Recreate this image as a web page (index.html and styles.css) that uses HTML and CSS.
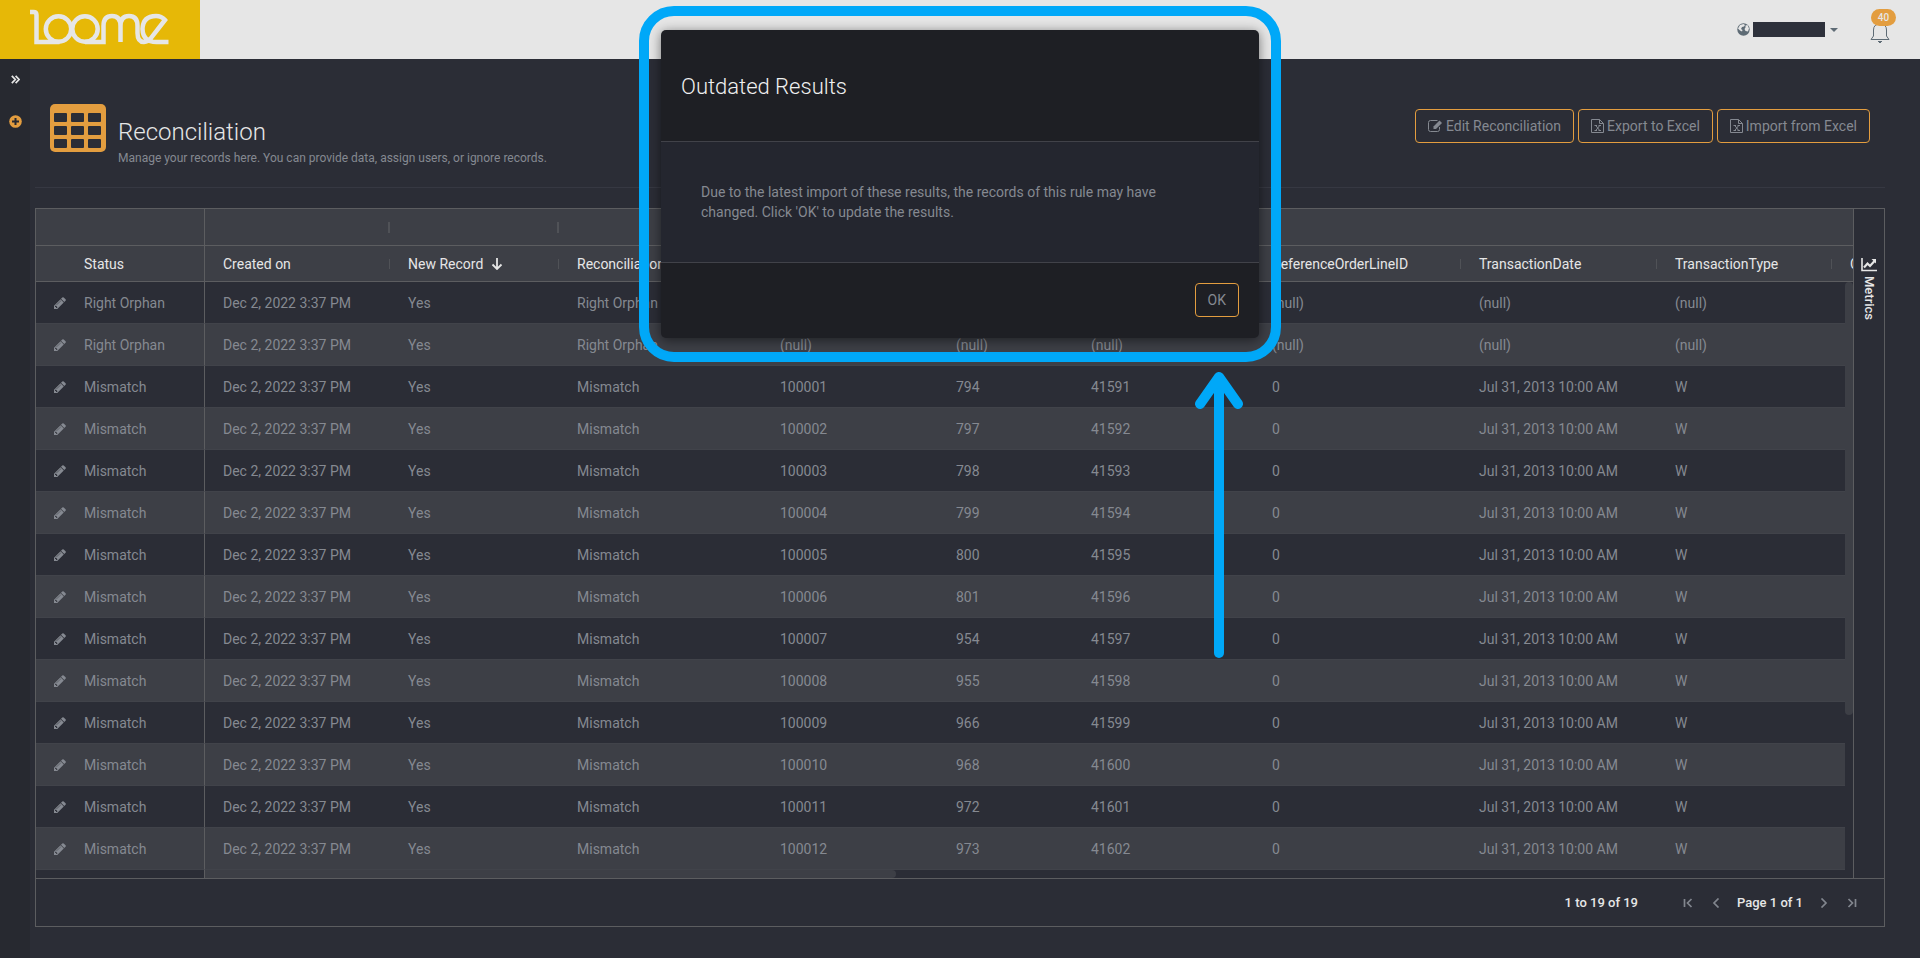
FILE: index.html
```html
<!DOCTYPE html>
<html lang="en">
<head>
<meta charset="utf-8">
<title>Reconciliation</title>
<link rel="stylesheet" href="styles.css">
</head>
<body>
<svg class="defs" aria-hidden="true">
  <symbol id="pencil" viewBox="0 0 1536 1536"><path fill="currentColor" d="M363 1408l91-91-235-235-91 91v107h128v128h107zM886 480q0-22-22-22-10 0-17 7l-542 542q-7 7-7 17 0 22 22 22 10 0 17-7l542-542q7-7 7-17zM832 288l416 416-832 832H0v-416zM1515 384q0 53-37 90l-166 166-416-416 166-165q36-38 90-38 53 0 91 38l235 234q37 39 37 91z"/></symbol>
  <symbol id="excel" viewBox="0 0 13 14"><path d="M.5.5h8l4 4v9H.5zM8.500.5v4h4" fill="none" stroke="currentColor"/><path d="M3.500 6.500h2.500M7.500 6.500H10M3.500 11.500h2.500M7.500 11.500H10M4.800 6.500l3.900 5M8.700 6.500l-3.900 5" fill="none" stroke="currentColor" stroke-width="1"/></symbol>
</svg>
<header class="topbar">
  <a class="brand" href="#" aria-label="Loome">
    <svg width="140" height="38" viewBox="0 0 140 38" fill="none" stroke="#e6e6e6" stroke-width="4.500">
      <path d="M1 4h3.500q3 0 3 3v27h23"/>
      <circle cx="29.500" cy="21" r="12.700"/>
      <circle cx="56" cy="21" r="12.700"/>
      <path d="M56 34h18.500V18q0-10 8.500-10t8.500 10v16M91.500 18q0-10 8.500-10t8.500 10v7q0 9 6.500 9 4 0 7-4l14-18q-3.500-4-9-4-13 0-13.500 13 .5 13 14 13h12"/>
    </svg>
  </a>
  <div class="account">
    <button class="tenant" type="button" aria-label="Tenant">
      <svg width="13" height="13" viewBox="0 0 13 13"><circle cx="6.500" cy="6.500" r="6.200" fill="#5e6b75"/><path d="M3 2l3.500-1 1.500 1-1 1.500-2 .5-1 2 1.500 1-.5 1.500-2-1L1 5.500zM8.500 2.500l2-.5 1.500 3.500-1 3-2.500-.5-1-2 1-1.500z" fill="#e6e6e6"/></svg>
      <span class="redacted"></span>
      <span class="caret"></span>
    </button>
    <button class="bell" type="button" aria-label="Notifications">
      <svg width="20" height="22" viewBox="0 0 20 22" fill="none" stroke="#5e6b75"><path d="M3.500 14V8q0-6 6.500-6t6.500 6v6l2.500 3.500H1z"/><path d="M8 19.500h4M9 20.500h2"/></svg>
      <span class="badge">40</span>
    </button>
  </div>
</header>
<div class="shell">
  <nav class="rail">
    <button type="button" aria-label="Expand"><svg width="9" height="9" viewBox="0 0 9 9" fill="none" stroke="#e6e6e6" stroke-width="1.700"><path d="M.8.8l3.500 3.700L.8 8.200M4.600.8l3.500 3.700-3.500 3.700"/></svg></button>
    <button type="button" aria-label="Add"><svg width="13" height="13" viewBox="0 0 13 13"><circle cx="6.500" cy="6.500" r="6.300" fill="#e39d3f"/><path d="M6.500 3v7M3 6.500h7" stroke="#272930" stroke-width="2"/></svg></button>
  </nav>
  <main class="content">
    <section class="page-head">
      <svg class="page-icon" width="56" height="48" viewBox="0 0 56 48"><rect width="56" height="48" rx="5" fill="#e39d3f"/><g fill="#2b2d36"><rect x="4" y="9" width="13" height="9" rx="1"/><rect x="21" y="9" width="13" height="9" rx="1"/><rect x="38" y="9" width="13" height="9" rx="1"/><rect x="4" y="22" width="13" height="9" rx="1"/><rect x="21" y="22" width="13" height="9" rx="1"/><rect x="38" y="22" width="13" height="9" rx="1"/><rect x="4" y="35" width="13" height="9" rx="1"/><rect x="21" y="35" width="13" height="9" rx="1"/><rect x="38" y="35" width="13" height="9" rx="1"/></g></svg>
      <div class="page-title">
        <h1>Reconciliation</h1>
        <p>Manage your records here. You can provide data, assign users, or ignore records.</p>
      </div>
      <div class="actions">
        <button class="btn" type="button"><svg width="15" height="12" viewBox="0 0 15 12"><path d="M11.500 7v2.500q0 2-2 2h-7q-2 0-2-2v-7q0-2 2-2h7" fill="none" stroke="currentColor"/><path d="M5.500 6.500L11.500.500l2.500 2.500-6 6H5.500z" fill="currentColor"/></svg>Edit Reconciliation</button>
        <button class="btn" type="button"><svg width="13" height="14"><use href="#excel"/></svg>Export to Excel</button>
        <button class="btn" type="button"><svg width="13" height="14"><use href="#excel"/></svg>Import from Excel</button>
      </div>
    </section>
    <section class="grid">
      <div class="grid-main">
        <div class="grid-view">
          <table>
            <colgroup><col class="c-status"><col class="c-created"><col class="c-new"><col class="c-rec"><col class="c-tid"><col class="c-pid"><col class="c-oid"><col class="c-line"><col class="c-date"><col class="c-type"><col></colgroup>
            <thead>
              <tr class="groups"><td class="pinned"></td><td class="sep"></td><td class="sep"></td><td colspan="8"></td></tr>
              <tr><th class="pinned" scope="col">Status</th><th class="sep" scope="col">Created on</th><th class="sep" scope="col">New Record <svg class="sort" width="12" height="12" viewBox="0 0 12 12" fill="none" stroke="currentColor" stroke-width="1.800"><path d="M6 0v11M1.500 6.500L6 11l4.500-4.500"/></svg></th><th class="sep" scope="col">Reconciliation</th><td class="sep"></td><td class="sep"></td><td class="sep"></td><th class="sep" scope="col">ReferenceOrderLineID</th><th class="sep" scope="col">TransactionDate</th><th class="sep" scope="col">TransactionType</th><th scope="col">C</th></tr>
            </thead>
            <tbody id="rows"></tbody>
          </table>
          <div class="hscroll"><span class="hthumb"></span></div>
          <div class="vscroll"><span class="vthumb"></span></div>
        </div>
        <aside class="side">
          <button type="button"><svg width="16" height="14" viewBox="0 0 16 14" fill="none" stroke="currentColor"><path d="M1 0v12.500h15" stroke-width="1.600"/><path d="M3 9.500l3.500-4 2.500 2.500 5-5.500" stroke-width="2.200"/><path d="M10.500 1H15v4.500z" fill="currentColor" stroke="none"/></svg><span>Metrics</span></button>
        </aside>
      </div>
      <footer class="pager">
        <span class="summary">1 to 19 of 19</span>
        <button type="button" aria-label="First page"><svg width="10" height="10" viewBox="0 0 10 10"><path d="M1.500 1v8M8.500 1l-4 4 4 4"/></svg></button>
        <button type="button" aria-label="Previous page"><svg width="10" height="10" viewBox="0 0 10 10"><path d="M7.500.5L3 5l4.500 4.500"/></svg></button>
        <span class="page-no">Page 1 of 1</span>
        <button type="button" aria-label="Next page"><svg width="10" height="10" viewBox="0 0 10 10"><path d="M2.500.5L7 5 2.500 9.500"/></svg></button>
        <button type="button" aria-label="Last page"><svg width="10" height="10" viewBox="0 0 10 10"><path d="M8.500 1v8M1.500 1l4 4-4 4"/></svg></button>
      </footer>
    </section>
  </main>
</div>
<div class="callout">
  <div class="dialog" role="dialog" aria-labelledby="dlg-title">
    <div class="dialog-head"><h2 id="dlg-title">Outdated Results</h2></div>
    <div class="dialog-body"><p>Due to the latest import of these results, the records of this rule may have changed. Click 'OK' to update the results.</p></div>
    <div class="dialog-foot"><button class="btn" type="button">OK</button></div>
  </div>
  <svg class="arrow" width="48" height="288" viewBox="0 0 48 288" fill="none" stroke="#00a8f8" stroke-linecap="round" stroke-linejoin="round"><path d="M24 8v274" stroke-width="10"/><path d="M5 33L24 6l19 27" stroke-width="10"/></svg>
</div>
<script src="rows.js"></script>
</body>
</html>
```
FILE: rows.js
```js
const products = [794, 797, 798, 799, 800, 801, 954, 955, 966, 968, 972, 973];
const records = [0, 1].map(() => ["Right Orphan", "(null)", "(null)", "(null)", "(null)", "(null)", "(null)"]);
products.forEach((id, i) => {
  records.push(["Mismatch", 100001 + i, id, 41591 + i, 0, "Jul 31, 2013 10:00 AM", "W"]);
});
const pencil = '<button class="edit" type="button" aria-label="Edit"><svg width="12" height="12"><use href="#pencil"/></svg></button>';
document.getElementById("rows").innerHTML = records.map(([status, ...rest]) =>
  `<tr><td class="pinned">${pencil}${status}</td><td>Dec 2, 2022 3:37 PM</td><td>Yes</td><td>${status}</td>` +
  rest.map(v => `<td>${v}</td>`).join("") + "<td></td></tr>").join("");
```
FILE: styles.css
```css
* { box-sizing: border-box; }
body { margin: 0; min-height: 100vh; display: flex; flex-direction: column; background: #2b2d36; color: #858991; font: 14px/20px Roboto, "Liberation Sans", sans-serif; overflow-x: hidden; }
button { margin: 0; padding: 0; border: 0; background: none; color: inherit; font: inherit; }
svg { display: block; }
h1, h2, p { margin: 0; }
.defs { position: absolute; width: 0; height: 0; }

.topbar { display: flex; justify-content: space-between; height: 59px; background: #e6e6e6; }
.brand { width: 200px; padding: 8px 0 0 29px; background: #e6b807; }
.account { display: flex; align-items: center; gap: 32px; padding-right: 30px; }
.tenant { display: flex; align-items: center; gap: 3px; }
.redacted { width: 72px; height: 15px; background: #2e313b; }
.caret { margin-left: 2px; border: 4px solid transparent; border-top-color: #5e6b75; border-bottom: 0; }
.bell { position: relative; padding-top: 6px; }
.badge { position: absolute; top: -7px; left: 1px; width: 25px; height: 17px; border-radius: 9px; background: #e39d3f; color: #e6e6e6; font-size: 10px; line-height: 18px; font-weight: 500; text-align: center; }

.shell { display: flex; flex: 1; }
.rail { display: flex; flex-direction: column; align-items: center; gap: 31px; width: 30px; padding-top: 16px; background: #272930; }
.content { flex: 1; min-width: 0; padding: 0 35px 32px 5px; }
.page-head { display: flex; align-items: flex-start; gap: 12px; height: 129px; margin-bottom: 20px; padding: 45px 15px 0 15px; border-bottom: 1px solid #363842; }
.page-title { flex: 1; padding-top: 11px; }
h1 { color: #e6e6e6; font-size: 24px; line-height: 35px; font-weight: 300; }
.page-title p { font-size: 12px; line-height: 16px; }
.actions { display: flex; gap: 4px; padding-top: 5px; }
.btn { display: flex; align-items: center; gap: 3px; height: 34px; padding: 0 12px; border: 1px solid #e39d3f; border-radius: 4px; }

.grid { border: 1px solid #5c5d60; }
.grid-main { display: flex; }
.grid-view { position: relative; flex: 1; min-width: 0; overflow: hidden; border-right: 1px solid #5c5d60; }
table { width: 100%; table-layout: fixed; border-collapse: separate; border-spacing: 0; }
.c-status { width: 169px; }
.c-created { width: 185px; }
.c-new { width: 169px; }
.c-rec { width: 203px; }
.c-tid { width: 176px; }
.c-pid { width: 135px; }
.c-oid { width: 181px; }
.c-line { width: 207px; }
.c-date { width: 196px; }
.c-type { width: 175px; }
td, th { height: 42px; padding: 0 0 0 18px; border-bottom: 1px solid #41434a; font-weight: 400; text-align: left; white-space: nowrap; }
thead td, thead th { height: 36px; border-bottom-color: #5c5d60; background: #3d3f46; color: #e6e6e6; }
thead .groups td { height: 37px; }
tbody tr:nth-child(even) { background: #3d3f46; }
.pinned { border-right: 1px solid #5c5d60; }
th.pinned { padding-left: 48px; }
thead .sep { background-image: linear-gradient(#505257, #505257); background-repeat: no-repeat; background-position: right center; background-size: 1px 10px; }
thead .groups .sep { background-size: 2px 11px; }
.sort { display: inline-block; margin-left: 4px; vertical-align: -1px; }
.edit { display: inline-block; margin-right: 18px; vertical-align: -1px; }
.hscroll { height: 8px; padding-left: 168px; }
.hthumb { display: block; width: 692px; height: 8px; border-left: 1px solid #5c5d60; border-radius: 0 4px 4px 0; background: #3d3f46; }
.vscroll { position: absolute; top: 73px; right: 0; bottom: 8px; width: 8px; background: #2b2d36; }
.vthumb { display: block; height: 433px; border-radius: 4px; background: #3d3f46; }
.side { width: 30px; padding-top: 49px; color: #e6e6e6; }
.side button { display: flex; flex-direction: column; align-items: center; gap: 4px; width: 30px; }
.side span { writing-mode: vertical-rl; font-size: 13px; line-height: 16px; font-weight: 500; }
.pager { display: flex; align-items: center; height: 48px; padding-right: 27px; border-top: 1px solid #5c5d60; color: #e6e6e6; font-size: 13px; font-weight: 500; }
.summary { margin: 0 45px 0 auto; }
.page-no { margin: 0 16px; }
.pager button + button { margin-left: 18px; }
.pager path { fill: none; stroke: #82868e; stroke-width: 1.700; }

.callout { position: absolute; top: 6px; left: 50%; width: 642px; margin-left: -321px; padding: 14px 12px; border: 10px solid #00a8f8; border-radius: 35px; }
.dialog { border-radius: 5px; background: #1e1f24; box-shadow: 0 2px 12px rgba(0, 0, 0, .5); }
.dialog-head { padding: 41px 20px 38px; border-bottom: 1px solid #414249; }
h2 { color: #f0f0f0; font-size: 22px; line-height: 32px; font-weight: 300; }
.dialog-body { padding: 40px 80px 40px 40px; border-bottom: 1px solid #414249; background: #24262f; }
.dialog-foot { display: flex; justify-content: flex-end; padding: 20px 20px 21px; }
.arrow { position: absolute; top: 355px; left: 546px; }
```
